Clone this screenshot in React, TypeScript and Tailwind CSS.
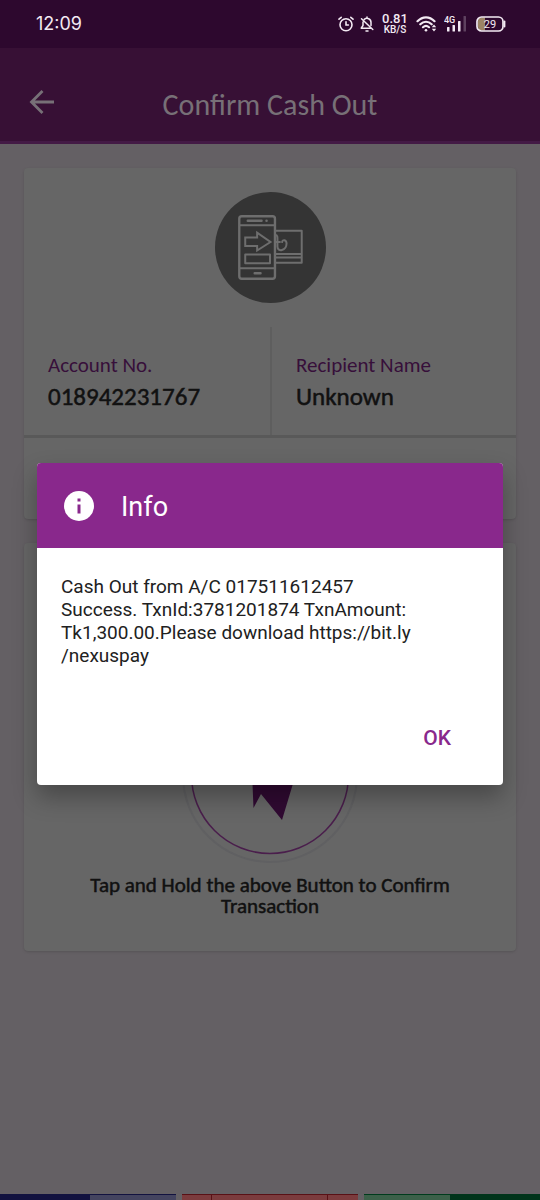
import React from "react";

function AlarmIcon() {
  return (
    <svg viewBox="0 0 16 16" className="size-4" fill="none" stroke="currentColor" strokeWidth="1.6" strokeLinecap="round">
      <circle cx="8" cy="8.8" r="6" />
      <path d="M8 5.8v3.2h2.4M1 3.2 3.2 1.3M15 3.2 12.8 1.3" />
    </svg>
  );
}

function MutedBellIcon() {
  return (
    <svg viewBox="0 0 14 16" className="h-4 w-3.5" fill="none" stroke="currentColor" strokeWidth="1.5" strokeLinecap="round" strokeLinejoin="round">
      <path d="M4.3 3.4A4 4 0 0 1 11 6.5v3M3 6v3.5L1.2 12.2H10.5M7 1v1.2M1.5 2.8 12.8 13.5" />
      <path d="M6 15h2" />
    </svg>
  );
}

function WifiIcon() {
  return (
    <svg viewBox="0 0 22 18" className="h-[18px] w-[22px]" fill="none" stroke="currentColor" strokeWidth="2.2" strokeLinecap="round">
      <path d="M1.5 6.2C6.5 1 13.5 1 18.5 6.2M4.3 9.3c3.4-3.3 8-3.3 11.4 0M7 12.2c2-1.800 4-1.800 6 0" />
      <circle cx="10" cy="15.3" r="1.3" fill="currentColor" stroke="none" />
      <path d="M15.8 12.2 18 9.6l2.2 2.6zM15.8 13.8 18 16.4l2.2-2.6z" fill="currentColor" stroke="none" />
    </svg>
  );
}

function SignalIcon() {
  return (
    <svg viewBox="0 0 24 18" className="h-[18px] w-6" fill="currentColor" role="img" aria-label="4G signal">
      <text x="0" y="8" fontSize="9" fontFamily="Roboto, sans-serif" fontWeight="500">4G</text>
      <rect x="3" y="12" width="2.5" height="4.5" rx="0.5" />
      <rect x="8.5" y="10" width="2.5" height="6.5" rx="0.5" />
      <rect x="14" y="6" width="2.5" height="10.5" rx="0.5" />
      <rect x="19.5" y="1" width="2.5" height="15.5" rx="0.5" opacity="0.25" />
    </svg>
  );
}

function BatteryIcon() {
  return (
    <svg viewBox="0 0 30 16" className="h-4 w-[30px]" fill="none" role="img" aria-label="Battery 29">
      <path d="M6 1.5h3V14.5H6a4 4 0 0 1-4-4v-5a4 4 0 0 1 4-4z" fill="#9b8464" />
      <rect x="1" y="1" width="26" height="14" rx="4.5" stroke="currentColor" strokeWidth="1.7" />
      <path d="M28.5 5.5v5" stroke="currentColor" strokeWidth="1.8" strokeLinecap="round" />
      <text x="14" y="12" textAnchor="middle" fontSize="11" fontFamily="Roboto, sans-serif" fill="currentColor">29</text>
    </svg>
  );
}

function CashOutIcon() {
  return (
    <svg viewBox="0 0 112 112" className="size-[111px]" fill="none" stroke="#6e6e6e" strokeWidth="2" strokeLinejoin="round">
      <circle cx="56" cy="56" r="56" fill="#343434" stroke="none" />
      <rect x="24.5" y="24.5" width="36" height="63" rx="2.5" strokeWidth="2.4" />
      <path d="M24.5 33.5h36M24.5 77h36" />
      <path d="M33 29h14M40 82h6" strokeWidth="2.4" strokeLinecap="round" />
      <circle cx="52" cy="29" r="1.3" fill="#6e6e6e" stroke="none" />
      <path d="M30.5 46h12v-5L56 50.5 42.5 59v-4.5h-12z" strokeLinejoin="miter" />
      <rect x="30.5" y="63" width="25" height="9" />
      <path d="M61 39h26.5v32.5H61M61 62.5h26M61 66h26" />
      <path d="M61 43.5c2.500 0 2 2.500 2 7M61 50.500h4.500M63 50.500v4.500c0 6 9 4.500 9.200-3 0-4-4.200-4.500-4.500-1.500" strokeLinecap="round" />
    </svg>
  );
}

function HoldButtonArt() {
  return (
    <svg viewBox="0 0 178 178" className="size-full" fill="none">
      <circle cx="89" cy="88" r="87" stroke="#606062" strokeWidth="2" />
      <circle cx="89" cy="88" r="78.5" stroke="#4a1e4c" strokeWidth="1.5" />
      <path d="M70 60 72.500 121 80 107 101 133 114 90V60z" fill="#300a32" />
    </svg>
  );
}

function StatusBar() {
  return (
    <div className="flex h-12 items-center justify-between bg-[#2d082e] pr-[34px] pl-9 font-['Inter',sans-serif] text-[#f3eaf3]">
      <span className="text-lg">12:09</span>
      <div className="flex items-center">
        <AlarmIcon />
        <span className="ml-1.5"><MutedBellIcon /></span>
        <span className="ml-2 flex w-[26px] flex-col items-center font-['Roboto',sans-serif] font-medium">
          <span className="text-[13px] leading-3">0.81</span>
          <span className="text-[10px] leading-[10px]">KB/S</span>
        </span>
        <span className="ml-2"><WifiIcon /></span>
        <span className="ml-1.5"><SignalIcon /></span>
        <span className="ml-2"><BatteryIcon /></span>
      </div>
    </div>
  );
}

function Field({ label, value }: { label: string; value: string }) {
  return (
    <div className="px-6 pt-6 pb-5">
      <dt className="text-[21px] leading-7 text-[#370f3a]">{label}</dt>
      <dd className="text-[25px] leading-9 text-[#111] [-webkit-text-stroke:0.5px_#111]">{value}</dd>
    </div>
  );
}

export default function App() {
  return (
    <div className="relative flex min-h-screen flex-col bg-[#646064] font-['Carlito','Lato',sans-serif]">
      <StatusBar />
      <header className="grid h-24 grid-cols-[84px_1fr_84px] items-center border-b-3 border-[#431a45] bg-[#371035] pt-4 text-[#777077]">
        <button type="button" aria-label="Back" className="pl-7">
          <svg viewBox="0 0 28 28" className="size-7" fill="none" stroke="currentColor" strokeWidth="2.8">
            <path d="M26 13H4M14.500 2 3.500 13l11 11" />
          </svg>
        </button>
        <h1 className="pt-1 text-center text-[30px]">Confirm Cash Out</h1>
      </header>

      <main className="flex flex-1 flex-col gap-6 p-6">
        <section className="rounded bg-[#666] shadow-sm">
          <div className="flex justify-center pt-6 pb-6"><CashOutIcon /></div>
          <dl className="grid grid-cols-2 border-b-3 border-[#595959]">
            <Field label="Account No." value="018942231767" />
            <div className="border-l-2 border-[#5e5e5e]"><Field label="Recipient Name" value="Unknown" /></div>
          </dl>
          <div className="h-[81px]" />
        </section>

        <section className="flex flex-col items-center rounded bg-[#666] px-14 pt-36 pb-[34px] shadow-sm">
          <button type="button" aria-label="Tap and hold to confirm" className="size-[178px] rounded-full">
            <HoldButtonArt />
          </button>
          <p className="mt-2.5 text-center text-[21px] leading-[21px] text-[#111] [-webkit-text-stroke:0.5px_#111]">
            Tap and Hold the above Button to Confirm Transaction
          </p>
        </section>
      </main>

      <div className="flex h-1.5">
        <div className="w-1/6 bg-[#12123f]" />
        <div className="w-[16%] border-t border-[#12123f] bg-[#44445f]" />
        <div className="mx-1.5 flex flex-1 border-t border-[#591015] bg-[#7b3b3d]">
          <div className="w-1/6 border-r border-[#591015]" />
          <div className="w-2/3 border-r border-[#591015]" />
        </div>
        <div className="w-[16%] border-t border-[#003b1c] bg-[#3c6049]" />
        <div className="w-1/6 bg-[#00341a]" />
      </div>

      <div className="absolute inset-0 flex items-center justify-center px-[37px] pt-12">
        <div role="dialog" aria-modal="true" aria-labelledby="dialog-title" className="w-full max-w-[466px] overflow-hidden rounded-sm bg-white font-['Roboto',sans-serif] shadow-[0_12px_24px_rgba(0,0,0,0.3)]">
          <div className="flex h-[85px] items-center gap-[27px] bg-[#89288c] px-[27px] text-white">
            <svg viewBox="0 0 30 30" className="size-[30px]">
              <circle cx="15" cy="15" r="15" fill="white" />
              <path d="M13.5 7.5h3v3h-3zM13.5 13.5h3v9h-3z" fill="#89288c" />
            </svg>
            <h2 id="dialog-title" className="pt-1 text-[27px]">Info</h2>
          </div>
          <p className="px-6 pt-[27px] text-[19px] leading-[23px] text-[#212121]">
            Cash Out from A/C 017511612457<br />
            Success. TxnId:3781201874 TxnAmount:<br />
            Tk1,300.00.Please download https://bit.ly<br />
            /nexuspay
          </p>
          <div className="flex justify-end px-9 pt-12 pb-[22px]">
            <button type="button" className="h-12 px-4 text-[21px] font-medium text-[#89288c]">OK</button>
          </div>
        </div>
      </div>
    </div>
  );
}
